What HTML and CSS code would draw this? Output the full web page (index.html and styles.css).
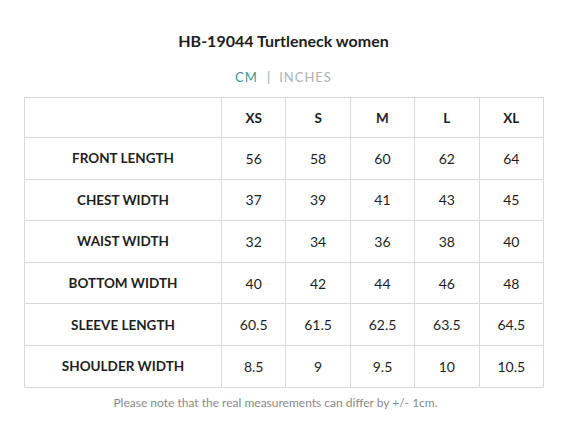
FILE: index.html
```html
<!DOCTYPE html>
<html>
<head>
<meta charset="utf-8">
<link rel="stylesheet" href="styles.css">
</head>
<body>
<div class="wrap">
  <h1 class="title">HB-19044 Turtleneck women</h1>
  <div class="units"><span class="unit active">CM</span><span class="sep">|</span><span class="unit">INCHES</span></div>
  <table class="sizes">
    <colgroup><col class="c-label"><col class="c-size"><col class="c-size"><col class="c-size"><col class="c-size"><col class="c-size"></colgroup>
    <tr class="head"><td class="label"></td><td>XS</td><td>S</td><td>M</td><td>L</td><td>XL</td></tr>
    <tr><td class="label">FRONT LENGTH</td><td>56</td><td>58</td><td>60</td><td>62</td><td>64</td></tr>
    <tr><td class="label">CHEST WIDTH</td><td>37</td><td>39</td><td>41</td><td>43</td><td>45</td></tr>
    <tr><td class="label">WAIST WIDTH</td><td>32</td><td>34</td><td>36</td><td>38</td><td>40</td></tr>
    <tr><td class="label">BOTTOM WIDTH</td><td>40</td><td>42</td><td>44</td><td>46</td><td>48</td></tr>
    <tr><td class="label">SLEEVE LENGTH</td><td>60.5</td><td>61.5</td><td>62.5</td><td>63.5</td><td>64.5</td></tr>
    <tr><td class="label">SHOULDER WIDTH</td><td>8.5</td><td>9</td><td>9.5</td><td>10</td><td>10.5</td></tr>
  </table>
  <p class="note">Please note that the real measurements can differ by +/- 1cm.</p>
</div>
</body>
</html>
```
FILE: styles.css
```css
html, body {
  margin: 0;
  padding: 0;
  background: #fff;
}
body {
  font-family: Lato, "Open Sans", sans-serif;
  color: #1e1e1e;
}
.wrap {
  width: 519px;
  margin-left: 24px;
  padding-top: 31px;
  text-align: center;
}
.title {
  margin: 0;
  font-size: 16px;
  font-weight: 700;
  line-height: 20px;
}
.units {
  margin-top: 17px;
  font-size: 13px;
  line-height: 18px;
  letter-spacing: 1px;
}
.unit { color: #b0b0b0; }
.unit.active { color: #3b9797; }
.sep {
  color: #a8a8a8;
  margin: 0 8px 0 9px;
}
.sizes {
  margin-top: 11px;
  width: 519px;
  border-collapse: collapse;
  table-layout: fixed;
  font-size: 14px;
}
.c-label { width: 197px; }
.c-size { width: 64.4px; }
.sizes td {
  border: 1px solid #d9d9d9;
  height: 40.6px;
  padding: 0;
  text-align: center;
  vertical-align: middle;
}
.sizes td.label {
  font-size: 13.5px;
  font-weight: 700;
}
.sizes .head td {
  font-size: 13.5px;
  font-weight: 700;
  height: 39px;
}
.note {
  margin: 7px 0 0;
  padding-right: 16px;
  font-size: 12px;
  line-height: 16px;
  color: #8a8a8a;
}
```
